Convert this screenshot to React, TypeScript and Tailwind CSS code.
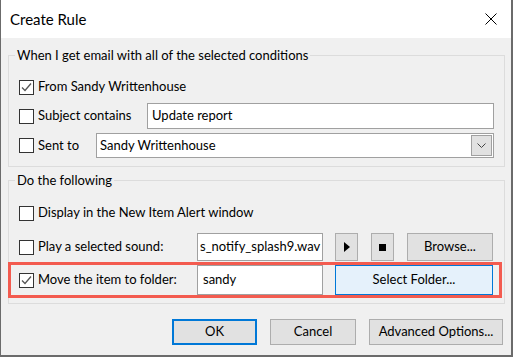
import React from "react";

const font = { fontFamily: '"Segoe UI", Lato, "Noto Sans", Arial, sans-serif' };

function Check({ checked }: { checked?: boolean }) {
    return (
        <div className="w-[15px] h-[15px] shrink-0 border border-[#333333] bg-white flex items-center justify-center">
            {checked && (
                <svg width="13" height="13" viewBox="0 0 13 13">
                    <polyline
                        points="2,6.5 5,9.5 11,2.5"
                        fill="none"
                        stroke="#555555"
                        strokeWidth="1.3"
                    />
                </svg>
            )}
        </div>
    );
}

function Field({ value, className }: { value: string; className: string }) {
    return (
        <div
            className={
                "h-full border border-[#a0a0a0] bg-white flex items-center overflow-hidden whitespace-nowrap " +
                className
            }
        >
            {value}
        </div>
    );
}

function Btn({
    children,
    className,
}: {
    children: React.ReactNode;
    className: string;
}) {
    return (
        <div
            className={
                "h-full flex items-center justify-center border " + className
            }
        >
            {children}
        </div>
    );
}

export default function App() {
    return (
        <div
            className="w-[513px] h-[357px] bg-[#f0f0f0] border-l border-r-2 border-b-2 border-[#6b6b6b] flex flex-col text-[13px] text-black"
            style={font}
        >
            {/* title bar */}
            <div className="h-[38px] shrink-0 bg-white flex items-center justify-between pl-[9px] pr-[14px]">
                <span className="text-[15px]">Create Rule</span>
                <svg width="12" height="12" viewBox="0 0 12 12">
                    <path d="M0.5 0.5 L11.5 11.5 M11.5 0.5 L0.5 11.5" stroke="#000" strokeWidth="1" />
                </svg>
            </div>

            <div className="flex flex-col pl-[7px] pr-[6px]">
                <fieldset className="mt-[7px] border border-[#dcdcdc] pb-[8px]">
                    <legend className="ml-[6px] px-[2px] leading-[20px]">
                        When I get email with all of the selected conditions
                    </legend>
                    <div className="flex flex-col pl-[10px] pr-[10px]">
                        <div className="mt-[9px] h-[26px] flex items-center">
                            <Check checked />
                            <span className="ml-[4px]">From Sandy Writtenhouse</span>
                        </div>
                        <div className="mt-[3px] h-[26px] flex items-center">
                            <div className="w-[128px] flex items-center">
                                <Check />
                                <span className="ml-[4px]">Subject contains</span>
                            </div>
                            <Field value="Update report" className="flex-1 pl-[4px]" />
                        </div>
                        <div className="mt-[4px] h-[25px] flex items-center">
                            <div className="w-[77px] flex items-center">
                                <Check />
                                <span className="ml-[4px]">Sent to</span>
                            </div>
                            <div className="flex-1 h-full border border-[#a0a0a0] bg-white flex items-center pl-[3px] pr-[1px]">
                                <span className="flex-1">Sandy Writtenhouse</span>
                                <div className="w-[21px] h-[21px] bg-[#e1e1e1] border border-[#a0a0a0] flex items-center justify-center">
                                    <svg width="9" height="5" viewBox="0 0 9 5">
                                        <polyline points="0.5,0.5 4.5,4.5 8.5,0.5" fill="none" stroke="#444" strokeWidth="1" />
                                    </svg>
                                </div>
                            </div>
                        </div>
                    </div>
                </fieldset>

                <fieldset className="mt-[3px] border border-[#dcdcdc] pb-[5px]">
                    <legend className="ml-[6px] px-[2px] leading-[20px]">Do the following</legend>
                    <div className="flex flex-col">
                        <div className="mt-[10px] h-[26px] flex items-center pl-[10px]">
                            <Check />
                            <span className="ml-[4px]">Display in the New Item Alert window</span>
                        </div>
                        <div className="mt-[7px] h-[28px] flex items-center pl-[10px] pr-[11px]">
                            <div className="w-[178px] flex items-center">
                                <Check />
                                <span className="ml-[4px]">Play a selected sound:</span>
                            </div>
                            <Field value="s_notify_splash9.wav" className="w-[126px] h-[26px] pl-[2px]" />
                            <Btn className="ml-[12px] w-[23px] bg-[#e1e1e1] border-[#adadad]">
                                <svg width="6" height="10" viewBox="0 0 6 10">
                                    <polygon points="0,0 6,5 0,10" fill="#000" />
                                </svg>
                            </Btn>
                            <Btn className="ml-[13px] w-[23px] bg-[#e1e1e1] border-[#adadad]">
                                <div className="w-[7px] h-[7px] bg-black" />
                            </Btn>
                            <Btn className="ml-auto w-[86px] bg-[#e1e1e1] border-[#adadad]">
                                Browse...
                            </Btn>
                        </div>
                        <div className="mt-[1px] -ml-[1px] mr-[2px] h-[36px] border-[3px] border-[#f35b4f] flex items-center pl-[8px] pr-[6px]">
                            <div className="w-[178px] flex items-center">
                                <Check checked />
                                <span className="ml-[4px]">Move the item to folder:</span>
                            </div>
                            <Field value="sandy" className="w-[126px] h-[26px] pl-[5px]" />
                            <Btn className="ml-auto w-[158px] h-[27px] bg-[#e5f1fb] border-[#0078d7]">
                                Select Folder...
                            </Btn>
                        </div>
                    </div>
                </fieldset>

                <div className="mt-[15px] h-[26px] flex justify-end pr-[2px]">
                    <Btn className="w-[85px] bg-[#e1e1e1] border-2 border-[#0078d7]">OK</Btn>
                    <Btn className="ml-[13px] w-[86px] bg-[#e1e1e1] border-[#adadad]">Cancel</Btn>
                    <Btn className="ml-[13px] w-[134px] bg-[#e1e1e1] border-[#adadad]">
                        Advanced Options...
                    </Btn>
                </div>
            </div>
        </div>
    );
}
